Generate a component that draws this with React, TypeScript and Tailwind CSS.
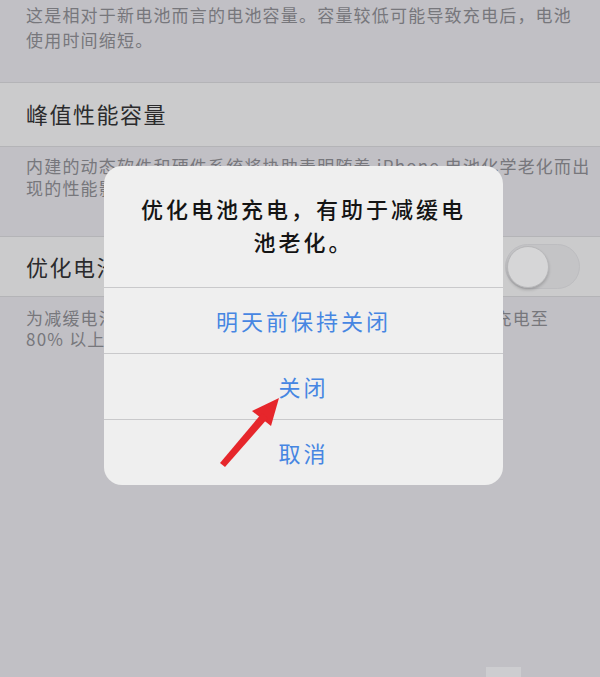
export default function App() {
  return (
    <div className="relative h-[677px] w-[600px] overflow-hidden bg-[#c1c0c5] font-['Noto_Sans_CJK_SC',sans-serif]">
      <div className="h-[82px] whitespace-nowrap px-[26px] pt-[2px] text-[17px] leading-[25px] tracking-[1.2px] text-[#77777c]">
        这是相对于新电池而言的电池容量。容量较低可能导致充电后，电池
        <br />
        使用时间缩短。
      </div>

      <div className="flex h-[65px] items-center border-y border-[#b4b4b7] bg-[#cbcbcc] pb-[3px] pl-[26px] text-[22px] tracking-[1.5px] text-[#2b2b2d]">
        峰值性能容量
      </div>

      <div className="h-[89px] whitespace-nowrap px-[26px] pt-[8px] text-[17px] leading-[22px] tracking-[1.2px] text-[#77777c]">
        内建的动态软件和硬件系统将协助表明随着 iPhone 电池化学老化而出
        <br />
        现的性能影响。
      </div>

      <div className="flex h-[61px] items-center justify-between border-y border-[#b4b4b7] bg-[#cbcbcc] pl-[26px] pr-[20px] text-[22px] tracking-[1.5px] text-[#2b2b2d]">
        <span>优化电池充电</span>
        <div className="flex h-[45px] w-[75px] items-center rounded-full border border-[#bdbdc0] bg-[#c4c4c6] p-[1px]">
          <div className="h-[42px] w-[42px] rounded-full border border-[#b8b8ba] bg-[#d6d6d7] shadow-[0_2px_3px_rgba(0,0,0,0.18)]" />
        </div>
      </div>

      <div className="whitespace-nowrap px-[26px] pt-[10px] text-[17px] leading-[21px] tracking-[1.2px] text-[#77777c]">
        为减缓电池老化，iPhone 会学习您的日常充电习惯，延迟充电至
        <br />
        80% 以上。
      </div>

      <div className="absolute left-[104px] top-[166px] w-[399px] overflow-hidden rounded-[18px] bg-[#efefef]">
        <div className="flex h-[121px] flex-col items-center justify-center pb-[4px] text-[22px] font-medium leading-[33px] tracking-[3px] text-[#141414]">
          <span>优化电池充电，有助于减缓电</span>
          <span>池老化。</span>
        </div>
        {["明天前保持关闭", "关闭", "取消"].map((label) => (
          <div
            key={label}
            className="flex h-[66px] items-center justify-center border-t border-[#c9c9cb] text-[22px] tracking-[3px] text-[#4686e2]"
          >
            {label}
          </div>
        ))}
      </div>

      <svg
        className="absolute left-0 top-0"
        width="600"
        height="677"
        viewBox="0 0 600 677"
      >
        <polygon points="279,398 252,411 271,426" fill="#e6262b" />
        <polygon points="220,463 225,467 268,418 262,413" fill="#e6262b" />
      </svg>

      <div className="absolute left-[486px] top-[667px] h-[10px] w-[35px] bg-[#cdcdd0]" />
    </div>
  );
}
